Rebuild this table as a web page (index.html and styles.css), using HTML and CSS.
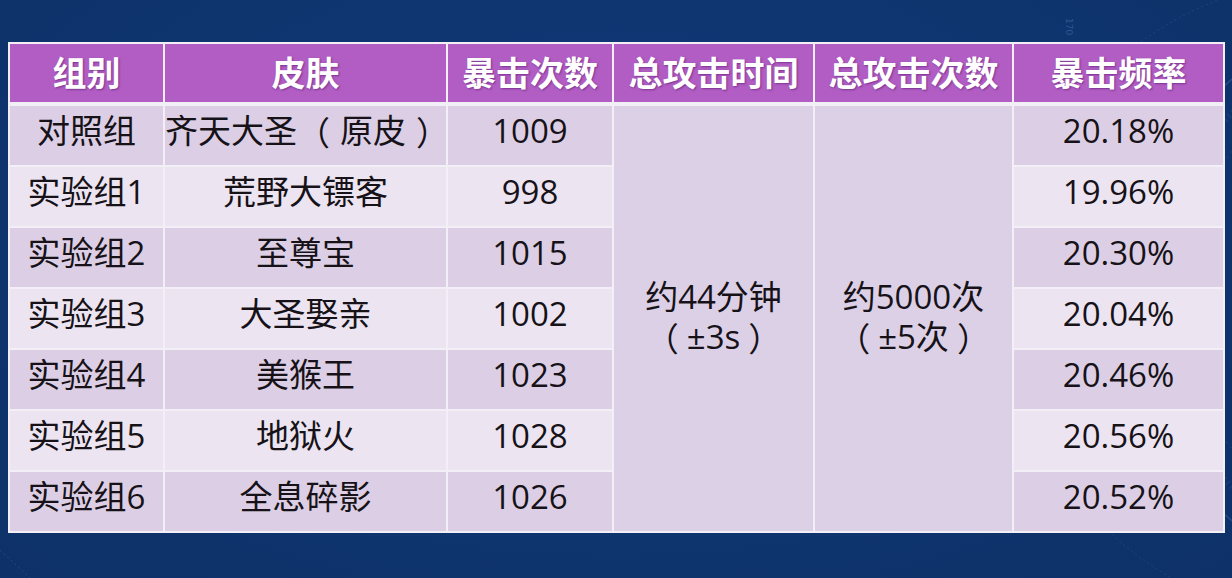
FILE: index.html
```html
<!DOCTYPE html>
<html lang="zh-CN">
<head>
<meta charset="utf-8">
<title>暴击频率对照表</title>
<link rel="stylesheet" href="styles.css">
</head>
<body>
<div class="stage">
  <svg class="deco" width="1232" height="578" viewBox="0 0 1232 578" aria-hidden="true">
    <circle cx="1420" cy="300" r="290" fill="none" stroke="#5f86c4" stroke-opacity="0.35" stroke-width="1.2"/>
    <circle cx="1420" cy="300" r="240" fill="none" stroke="#5f86c4" stroke-opacity="0.25" stroke-width="1" stroke-dasharray="2 4"/>
    <circle cx="1420" cy="300" r="265" fill="none" stroke="#5f86c4" stroke-opacity="0.22" stroke-width="6" stroke-dasharray="1 4"/>
    <circle cx="1330" cy="300" r="320" fill="none" stroke="#5f86c4" stroke-opacity="0.2" stroke-width="1" stroke-dasharray="2 3"/>
    <text x="1066" y="18" transform="rotate(90 1066 18)" fill="#5f86c4" fill-opacity="0.45" font-size="9" font-family="DejaVu Sans, sans-serif">170</text>
    <line x1="0" y1="550" x2="30" y2="578" stroke="#5f86c4" stroke-opacity="0.3" stroke-dasharray="2 3"/>
  </svg>
  <table class="grid">
    <colgroup>
      <col class="c1"><col class="c2"><col class="c3"><col class="c4"><col class="c5"><col class="c6">
    </colgroup>
    <thead>
      <tr>
        <th>组别</th><th>皮肤</th><th>暴击次数</th><th>总攻击时间</th><th>总攻击次数</th><th>暴击频率</th>
      </tr>
    </thead>
    <tbody>
      <tr class="odd">
        <td>对照组</td><td class="skin">齐天大圣<span class="lp">（</span>原皮<span class="rp">）</span></td><td>1009</td>
        <td rowspan="7" class="merged"><span class="ml">约44分钟</span><span class="ml"><span class="lp">（</span>±3s<span class="rp">）</span></span></td>
        <td rowspan="7" class="merged"><span class="ml">约5000次</span><span class="ml"><span class="lp">（</span>±5次<span class="rp">）</span></span></td>
        <td>20.18%</td>
      </tr>
      <tr class="even"><td>实验组1</td><td>荒野大镖客</td><td>998</td><td>19.96%</td></tr>
      <tr class="odd"><td>实验组2</td><td>至尊宝</td><td>1015</td><td>20.30%</td></tr>
      <tr class="even"><td>实验组3</td><td>大圣娶亲</td><td>1002</td><td>20.04%</td></tr>
      <tr class="odd"><td>实验组4</td><td>美猴王</td><td>1023</td><td>20.46%</td></tr>
      <tr class="even"><td>实验组5</td><td>地狱火</td><td>1028</td><td>20.56%</td></tr>
      <tr class="odd"><td>实验组6</td><td>全息碎影</td><td>1026</td><td>20.52%</td></tr>
    </tbody>
  </table>
</div>
</body>
</html>
```

FILE: styles.css
```css
html, body {
  margin: 0;
  padding: 0;
}
body {
  background: #0f356f;
  font-family: "Open Sans", "Noto Sans CJK SC", sans-serif;
  width: 1232px;
  height: 578px;
  overflow: hidden;
}
.stage {
  position: relative;
  width: 1232px;
  height: 578px;
  padding: 42px 0 0 8px;
  box-sizing: border-box;
  background: radial-gradient(ellipse at 50% 40%, #12397a 0%, #0f356f 60%, #0d3168 100%);
}
.deco {
  position: absolute;
  left: 0;
  top: 0;
}
.grid {
  position: relative;
  border-collapse: separate;
  border-spacing: 2px;
  background: #f3eff7;
  table-layout: fixed;
  width: 1217px;
}
.c1 { width: 153px; }
.c2 { width: 281px; }
.c3 { width: 164px; }
.c4 { width: 199px; }
.c5 { width: 197px; }
.c6 { width: 209px; }
th, td {
  padding: 0;
  text-align: center;
  vertical-align: middle;
}
th {
  height: 56px;
  padding-bottom: 2px;
  background: #b15dc4;
  color: #ffffff;
  font-family: "Noto Sans CJK SC", sans-serif;
  font-size: 34px;
  font-weight: 700;
  line-height: 40px;
  text-shadow: 1px 1px 2px rgba(60, 0, 80, 0.45);
  border-bottom: 2px solid #f3eff7;
}
td {
  height: 50px;
  padding-bottom: 9px;
  font-size: 33px;
  color: #161218;
  line-height: 40px;
  white-space: nowrap;
}
.odd td { background: #dccfe5; }
.even td { background: #ece5f1; }
td.merged {
  background: #dcd0e6;
  padding-bottom: 4px;
}
.ml {
  display: block;
  height: 40px;
  line-height: 40px;
}
.lp, .rp {
  display: inline-block;
  height: 40px;
  line-height: 40px;
  vertical-align: top;
  font-family: "Noto Sans CJK SC", sans-serif;
}
.lp { margin-right: 10px; }
.rp { margin-left: 10px; }
.merged .lp { margin-right: 8px; }
.merged .rp { margin-left: 8px; }
```
